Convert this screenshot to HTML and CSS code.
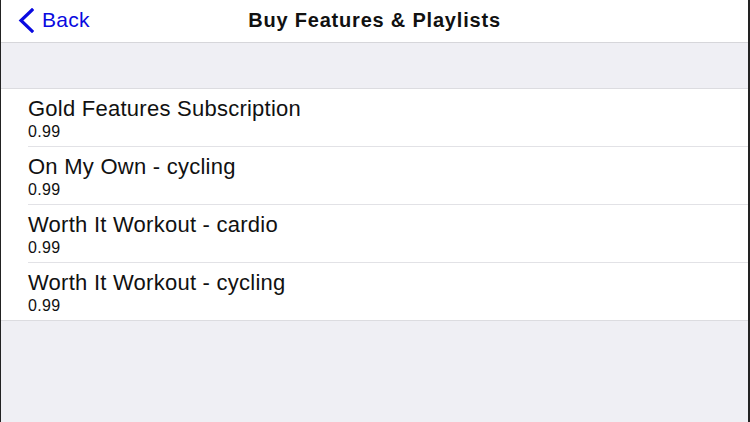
FILE: index.html
```html
<!DOCTYPE html>
<html>
<head>
<meta charset="utf-8">
<link rel="stylesheet" href="styles.css">
</head>
<body>
<div class="screen">
  <header class="nav">
    <a class="back">
      <svg class="chev" width="16" height="25" viewBox="0 0 16 25"><path d="M14 2 L3 12.5 L14 23" fill="none" stroke="currentColor" stroke-width="3.2" stroke-linecap="square"/></svg>
      <span>Back</span>
    </a>
    <h1 class="title">Buy Features &amp; Playlists</h1>
  </header>
  <div class="spacer"></div>
  <ul class="list">
    <li class="row"><div class="name">Gold Features Subscription</div><div class="price">0.99</div></li>
    <li class="row"><div class="name">On My Own - cycling</div><div class="price">0.99</div></li>
    <li class="row"><div class="name">Worth It Workout - cardio</div><div class="price">0.99</div></li>
    <li class="row"><div class="name">Worth It Workout - cycling</div><div class="price">0.99</div></li>
  </ul>
</div>
</body>
</html>
```
FILE: styles.css
```css
html, body { margin: 0; padding: 0; }
body { font-family: "Liberation Sans", Arial, sans-serif; background: #efeff4; }
.screen {
  width: 750px; height: 422px; box-sizing: border-box;
  border-left: 1px solid #222; border-right: 2px solid #222;
  background: #efeff4; overflow: hidden;
}
.nav {
  height: 42px; background: #fff; border-bottom: 1px solid #d6d6da;
  position: relative; display: flex; align-items: center; justify-content: center;
}
.back {
  position: absolute; left: 17px; top: 0; height: 42px;
  display: flex; align-items: center; gap: 8px; color: #0a0ae0; font-size: 21px; letter-spacing: 0.3px;
}
.chev { margin-top: -1px; }
.back span { margin-top: -2px; }
.title { margin: 0; font-size: 20px; font-weight: bold; letter-spacing: 0.8px; color: #111; margin-top: -2px; }
.spacer { height: 45px; border-bottom: 1px solid #dcdce0; }
.list { list-style: none; margin: 0; padding: 0; background: #fff; }
.row { height: 58px; box-sizing: border-box; padding: 7px 0 0 27px; position: relative; }
.row::after {
  content: ""; position: absolute; left: 27px; right: 0; bottom: 0; border-top: 1px solid #e2e2e6;
}
.row:last-child::after { left: 0; border-top-color: #dcdce0; }
.name { font-size: 22px; line-height: 25px; letter-spacing: 0.25px; color: #111; }
.price { font-size: 16px; line-height: 17px; letter-spacing: 0.3px; color: #111; margin-top: 2px; }
```
